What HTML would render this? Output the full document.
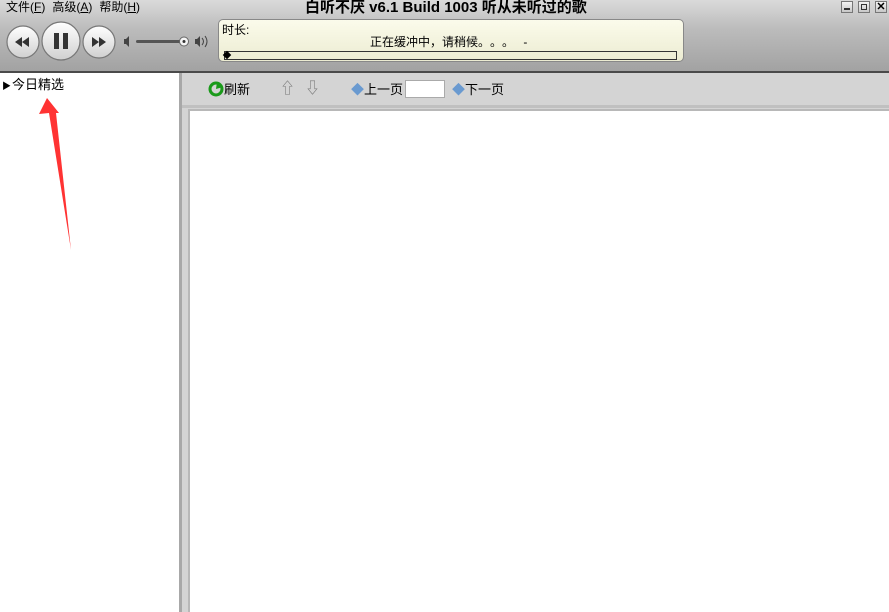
<!DOCTYPE html>
<html><head><meta charset="utf-8">
<style>
*{margin:0;padding:0;box-sizing:border-box}
body{width:889px;height:612px;overflow:hidden;position:relative;background:#fff;font-family:"Liberation Sans","Noto Sans CJK SC","WenQuanYi Zen Hei",sans-serif;font-size:12px;color:#000}
.hdr{position:absolute;left:0;top:0;width:889px;height:71px;background:linear-gradient(#dadada,#bcbcbc 40%,#a2a2a2)}
.hline{position:absolute;left:0;top:71px;width:889px;height:2px;background:#4a4a4a}
.menu{position:absolute;left:6px;top:0;font-size:12px;line-height:15px}
.menu span{margin-right:7px}
.title{position:absolute;left:305px;top:-1px;font-weight:bold;font-size:15px;line-height:17px}
.wb{position:absolute;top:1px;width:12px;height:12px;border:1px solid #777;background:linear-gradient(#f4f4f4,#c8c8c8)}
.disp{position:absolute;left:218px;top:19px;width:466px;height:43px;border:1px solid #888;border-radius:5px;background:linear-gradient(#fbfbeb,#ececd2)}
.left{position:absolute;left:0;top:73px;width:179px;height:539px;background:#fff}
.lb{position:absolute;left:179px;top:73px;width:3px;height:539px;background:#a8a8a8}
.tb{position:absolute;left:182px;top:73px;width:707px;height:539px;background:#d4d4d4}
.tbl{position:absolute;left:182px;top:105px;width:707px;height:3px;background:#c0c0c0}
.content{position:absolute;left:188px;top:109px;width:701px;height:503px;background:#fff;border-left:2px solid #b8b8b8;border-top:2px solid #b8b8b8}
.t{position:absolute;font-size:13px;line-height:16px}
</style></head><body>
<div class="hdr"></div>
<div class="hline"></div>
<div class="menu"><span>文件(<u>F</u>)</span><span>高级(<u>A</u>)</span><span>帮助(<u>H</u>)</span></div>
<div class="title">白听不厌 v6.1 Build 1003 听从未听过的歌</div>
<div class="wb" style="left:841px"><div style="position:absolute;left:2px;bottom:2px;width:6px;height:2px;background:#333"></div></div>
<div class="wb" style="left:858px"><div style="position:absolute;left:2px;top:2px;width:6px;height:6px;border:1px solid #333"></div></div>
<div class="wb" style="left:875px;font-size:11px;line-height:10px;text-align:center;font-weight:bold">✕</div>
<svg style="position:absolute;left:0;top:20px" width="220" height="45">
<defs><linearGradient id="g" x1="0" y1="0" x2="0" y2="1"><stop offset="0" stop-color="#fff"/><stop offset="1" stop-color="#d0d0d0"/></linearGradient></defs>
<circle cx="23" cy="22" r="16" fill="url(#g)" stroke="#777" stroke-width="1.2"/>
<circle cx="61" cy="21" r="19" fill="url(#g)" stroke="#777" stroke-width="1.2"/>
<circle cx="99" cy="22" r="16" fill="url(#g)" stroke="#777" stroke-width="1.2"/>
<path d="M15 22 L22 17 L22 27Z M22 22 L29 17 L29 27Z" fill="#333"/>
<rect x="54" y="13" width="5" height="16" fill="#333"/><rect x="63" y="13" width="5" height="16" fill="#333"/>
<path d="M92 17 L99 22 L92 27Z M99 17 L106 22 L99 27Z" fill="#333"/>
<path d="M124 19h2l3-3v11l-3-3h-2z" fill="#444"/>
<rect x="136" y="20" width="52" height="3" rx="1.5" fill="#555"/>
<circle cx="184" cy="21.5" r="4.5" fill="#f4f4f4" stroke="#666"/><circle cx="184" cy="21.5" r="1.5" fill="#333"/>
<path d="M195 19h2l3-3v11l-3-3h-2z" fill="#444"/>
<path d="M202 18q3 3.5 0 7M205 16q4 5.5 0 11" stroke="#444" fill="none"/>
</svg>
<div class="disp">
<div class="t" style="left:3px;top:2px;font-size:12px">时长:</div>
<div class="t" style="left:151px;top:14px;font-size:12px">正在缓冲中，请稍候<span style="letter-spacing:6px">。。。</span> -</div>
<div style="position:absolute;left:5px;top:31px;width:453px;height:9px;border:1px solid #333"></div>
<div style="position:absolute;left:5px;top:32px;width:6px;height:6px;background:#000;transform:rotate(45deg)"></div>
</div>
<div class="left"></div>
<div class="lb"></div>
<div class="tb"></div>
<div class="tbl"></div>
<div class="content"></div>
<div class="t" style="left:2px;top:78px;font-size:9px">▶</div>
<div class="t" style="left:12px;top:77px">今日精选</div>
<svg style="position:absolute;left:0;top:90px" width="90" height="170"><path d="M47 8 L59 23 L56 23 L71 160 L49 23 L39 24Z" fill="#f33"/></svg>
<svg style="position:absolute;left:208px;top:81px" width="16" height="16"><circle cx="8" cy="8" r="6" fill="none" stroke="#1a9a1a" stroke-width="3"/><path d="M9 1 L15 6 L8 8Z" fill="#1a9a1a"/></svg>
<div class="t" style="left:224px;top:82px">刷新</div>
<div class="t" style="left:280px;top:81px;color:#777;font-size:15px">⇧</div>
<div class="t" style="left:305px;top:81px;color:#777;font-size:15px">⇩</div>
<div class="t" style="left:351px;top:82px;color:#6a9ad0">◆</div>
<div class="t" style="left:364px;top:82px">上一页</div>
<div style="position:absolute;left:405px;top:80px;width:40px;height:18px;background:#fff;border:1px solid #aaa"></div>
<div class="t" style="left:452px;top:82px;color:#6a9ad0">◆</div>
<div class="t" style="left:465px;top:82px">下一页</div>
</body></html>
